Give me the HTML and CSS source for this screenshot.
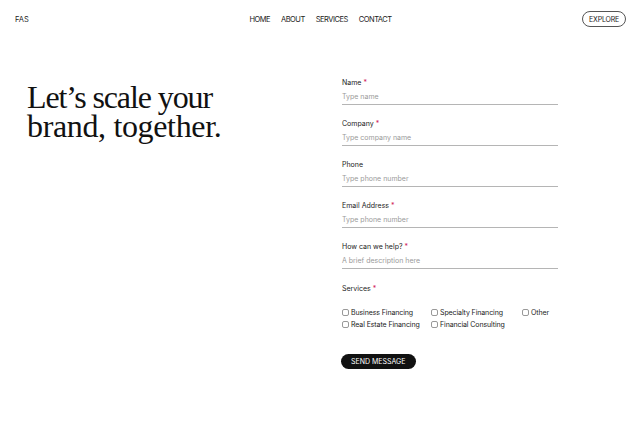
FILE: index.html
```html
<!DOCTYPE html>
<html>
<head>
<meta charset="utf-8">
<link rel="stylesheet" href="styles.css">
</head>
<body>
<header class="topbar">
  <div class="logo">FAS</div>
  <nav class="nav">
    <a>HOME</a><a>ABOUT</a><a>SERVICES</a><a>CONTACT</a>
  </nav>
  <div class="right"><span class="explore">EXPLORE</span></div>
</header>
<main class="main">
  <section class="hero">
    <h1><span class="l1">Let’s scale your</span><span class="l2">brand, together.</span></h1>
  </section>
  <form class="form">
    <div class="field">
      <label>Name <span class="req">*</span></label>
      <div class="input">Type name</div>
    </div>
    <div class="field">
      <label>Company <span class="req">*</span></label>
      <div class="input">Type company name</div>
    </div>
    <div class="field">
      <label>Phone</label>
      <div class="input">Type phone number</div>
    </div>
    <div class="field">
      <label>Email Address <span class="req">*</span></label>
      <div class="input">Type phone number</div>
    </div>
    <div class="field">
      <label>How can we help? <span class="req">*</span></label>
      <div class="input">A brief description here</div>
    </div>
    <div class="services">
      <label>Services <span class="req">*</span></label>
      <div class="checks">
        <span class="check"><i></i>Business Financing</span>
        <span class="check"><i></i>Specialty Financing</span>
        <span class="check"><i></i>Other</span>
        <span class="check"><i></i>Real Estate Financing</span>
        <span class="check"><i></i>Financial Consulting</span>
      </div>
    </div>
    <div class="send">SEND MESSAGE</div>
  </form>
</main>
</body>
</html>
```
FILE: styles.css
```css
* { box-sizing: border-box; }
html, body { margin: 0; padding: 0; background: #fff; }
body {
  width: 640px;
  height: 426px;
  overflow: hidden;
  font-family: Inter, "Liberation Sans", sans-serif;
  color: #111;
}
.topbar {
  display: grid;
  grid-template-columns: 1fr auto 1fr;
  align-items: center;
  height: 38px;
  padding: 0 14px 0 15px;
  font-size: 7.5px;
}
.logo { color: #222; }
.nav { display: flex; gap: 11px; letter-spacing: -0.5px; }
.nav a { color: #222; }
.right { display: flex; justify-content: flex-end; }
.explore {
  display: inline-flex;
  align-items: center;
  height: 16px;
  padding: 0 6px;
  border: 1px solid #555;
  border-radius: 9px;
  font-size: 7px;
  letter-spacing: -0.2px;
  color: #222;
}
.main {
  display: flex;
  padding-top: 40px;
}
.hero { width: 342px; padding-left: 27px; }
.hero h1 {
  margin: 0;
  padding-top: 5px;
  font-family: "Liberation Serif", serif;
  font-weight: 400;
  font-size: 32px;
  line-height: 29px;
  color: #111;
}
.hero h1 span { display: block; }
.hero .l1 { letter-spacing: -1.1px; }
.hero .l2 { letter-spacing: -0.35px; }
.form { width: 216px; display: flex; flex-direction: column; }
.field {
  height: 41px;
  font-size: 7px;
}
.field label { display: block; height: 14px; line-height: 9px; color: #222; }
.req { color: #d0245a; }
.input {
  height: 9px;
  line-height: 9px;
  color: #9a9a9a;
  border-bottom: 1px solid #b5b5b5;
  box-sizing: content-box;
  padding-bottom: 3px;
}
.services { font-size: 7px; color: #222; padding-top: 1px; }
.services label { display: block; line-height: 9px; height: 24px; }
.checks {
  display: grid;
  grid-template-columns: 89px 91px auto;
  row-gap: 3px;
  letter-spacing: -0.1px;
}
.check { display: flex; align-items: center; height: 9px; color: #222; }
.check i {
  display: inline-block;
  width: 7px; height: 7px;
  border: 1px solid #999;
  border-radius: 2px;
  margin-right: 2px;
}
.send {
  margin-top: 25px;
  align-self: flex-start;
  margin-left: -1px;
  height: 15px;
  padding: 0 10px;
  display: flex;
  align-items: center;
  background: #111;
  color: #fff;
  border-radius: 8px;
  font-size: 7px;
}
```
